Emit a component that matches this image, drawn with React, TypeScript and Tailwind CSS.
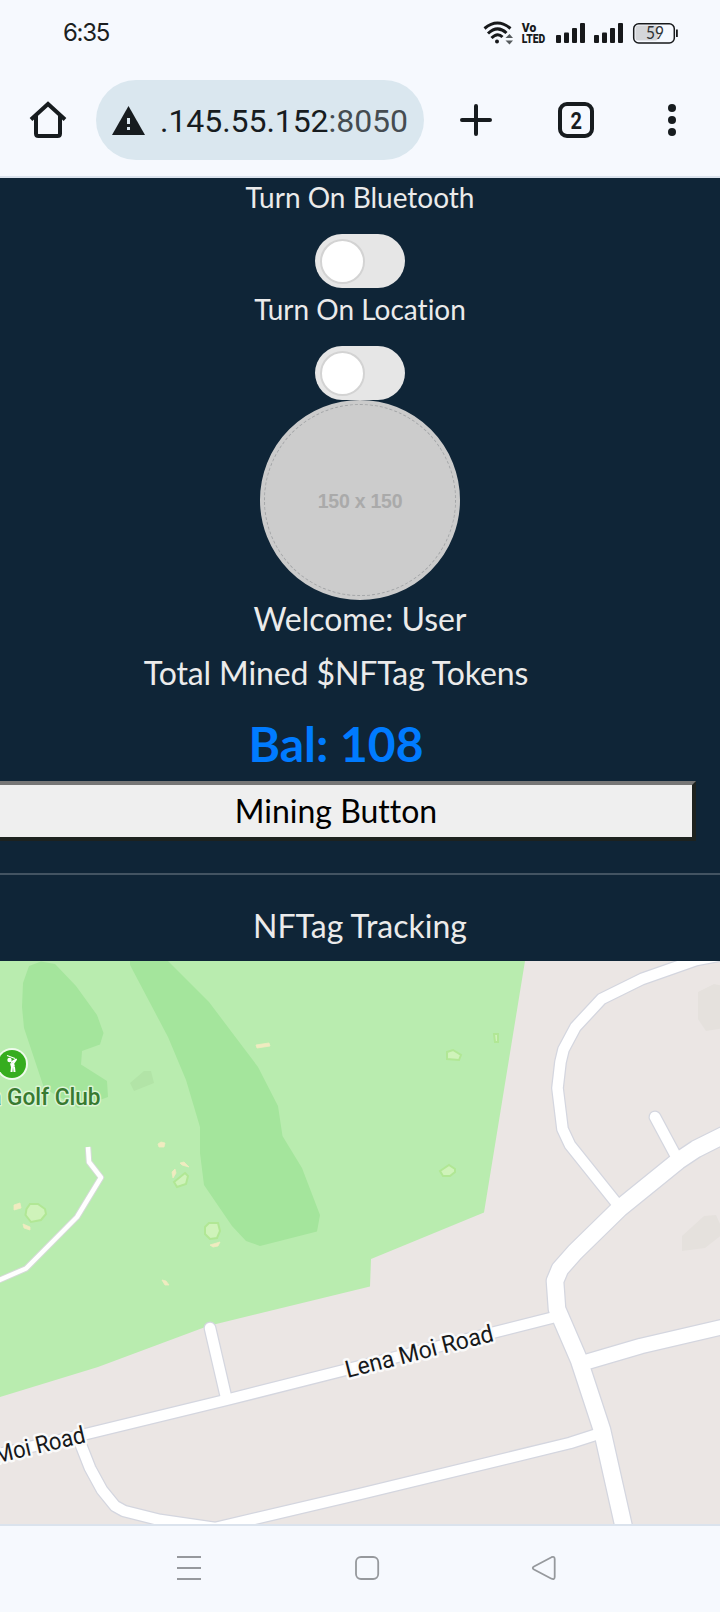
import React from "react";

const minorRoads = [
  "M760 948 L696 960 L642 979 L601.500 999 L575.500 1027 L563.500 1049.500 L560.500 1062 L557.500 1088 L562.500 1129 L570 1145 L618 1205",
  "M655 1117 L678 1160",
  "M-40 1463 L80 1435.500 L226 1400 L555 1317",
  "M210 1328 L226 1397",
  "M79 1440 L90 1468 L102 1490 L115 1506 L124 1511 L160 1520 L215 1528 L360 1494 L570 1443 L598 1434",
];

const path = "M-10 1284 L26 1268.500 L77 1217 L101 1177.500 L89 1162 L88 1147";
const hook = "M740 1127 L696 1149 L678 1161 L620 1208 L575 1252 L560 1269 L555 1281 L557 1309 L579 1360 L602 1430 L624 1528";
const east = "M583 1363 L641 1346 L740 1323";

const greens = [
  "M30 1204 L38 1204 L45 1209 L46 1214 L41 1220 L31 1222 L25.500 1215 L26.500 1209 Z",
  "M185 1173 L188 1176 L186 1184 L177 1187 L174 1182 Z",
  "M209 1223 L218 1223 L220 1231 L217 1238 L210 1239 L205 1234 L205 1227 Z",
  "M447 1052 L453 1050 L461 1055 L459 1060 L447 1059 Z",
  "M494 1034 L498 1034 L498 1042 L495 1042 Z",
  "M440 1171 L449 1165 L455 1169 L455 1172 L450 1176 L443 1176 Z",
];

const bunkers = [
  "M256 1045 L269 1043 L270 1046 L257 1048 Z",
  "M158 1144 L161 1142 L165 1143 L164 1147 L159 1147 Z",
  "M180 1163 L184 1162 L189 1167 L182 1165 Z",
  "M172 1172 L175 1169 L176 1173 L173 1178 Z",
  "M14 1205 L20 1203 L21 1208 L14 1210 Z",
  "M23 1224 L30 1227 L30 1230 L24 1228 Z",
  "M210 1245 L220 1242 L218 1246 L213 1247 Z",
  "M162 1280 L166 1281 L169 1285 L165 1285 Z",
];

function StatusBar() {
  return (
    <div className="flex h-20 items-center bg-[#f6f9fe] pl-[63px]">
      <span className="mb-[14px] font-['Inter',sans-serif] text-[24px] tracking-[-1.3px] text-[#1c1f21]">6:35</span>
      <svg className="mb-[14px] ml-auto shrink-0" width="250" height="50" viewBox="470 7 250 50" fill="none">
        <g stroke="#17191b" strokeWidth="3" fill="none">
          <path d="M484.500 27.500 Q497.500 16.500 510.500 27.500" />
          <path d="M488 32.500 Q497.500 23.500 506.500 32" />
          <path d="M491.500 37 Q497.500 31 502.500 36" />
        </g>
        <circle cx="497" cy="40.500" r="2" fill="#17191b" />
        <path d="M505.500 37 L509.500 33 L513 37 Z M505.500 39.500 L509.500 43.500 L513 39.500 Z" fill="#555a5d" />
        <g fill="#17191b" className="font-['Roboto',sans-serif] font-black">
          <text x="521.800" y="30.800" fontSize="12" textLength="14.500" lengthAdjust="spacingAndGlyphs">Vo</text>
          <text x="521.800" y="41.500" fontSize="13" textLength="23.500" lengthAdjust="spacingAndGlyphs">LTED</text>
          <rect x="556" y="34" width="5" height="8" rx="1" />
          <rect x="564" y="31.500" width="5" height="10.500" rx="1" />
          <rect x="572" y="27" width="5" height="15" rx="1" />
          <rect x="580" y="22" width="5" height="20" rx="1" />
          <rect x="594" y="34" width="5" height="8" rx="1" />
          <rect x="602" y="31.500" width="5" height="10.500" rx="1" />
          <rect x="610" y="27" width="5" height="15" rx="1" />
          <rect x="618" y="22" width="5" height="20" rx="1" />
        </g>
        <rect x="633.700" y="22.700" width="40.600" height="19.300" rx="5" stroke="#17191b" strokeWidth="1.500" />
        <rect x="635.500" y="24.500" width="22.500" height="15" rx="2.500" fill="#d4d6d9" />
        <rect x="676" y="28.500" width="1.800" height="7.500" fill="#17191b" />
        <text x="646" y="38" className="font-['Lato',sans-serif]" fontSize="16.500" fill="#303336" textLength="18" lengthAdjust="spacingAndGlyphs">59</text>
      </svg>
    </div>
  );
}

function BrowserBar() {
  return (
    <div className="flex h-[98px] items-start border-b-2 border-[#dbe3ed] bg-[#f6f9fe]">
      <svg className="mt-[18px] shrink-0" width="96" height="44" viewBox="0 98 96 44" fill="none">
        <path d="M31 119.500 L48 104 L65 119.500 M36 116 V133.500 Q36 136 38.500 136 H57.500 Q60 136 60 133.500 V116" stroke="#171c1f" strokeWidth="4" />
      </svg>
      <div className="flex h-20 w-[328px] shrink-0 items-center overflow-hidden rounded-full bg-[#dae7ef] pl-4">
        <svg width="33" height="29" viewBox="0 0 33 29" className="shrink-0">
          <path d="M16.500 0 L33 29 H0 Z" fill="#171c1f" />
          <path d="M15 12 H18 V18 H15 Z M15 21 H18 V24 H15 Z" fill="#dae7ef" />
        </svg>
        <span className="ml-[15px] whitespace-nowrap pt-px font-['Roboto',sans-serif] text-[32px] tracking-[-0.06px] text-[#171c1f]">
          .145.55.152<span className="text-[#454c51]">:8050</span>
        </span>
      </div>
      <svg className="mt-[18px] shrink-0" width="296" height="44" viewBox="424 98 296 44" fill="none">
        <path d="M462 120 H490 M476 106 V134" stroke="#171c1f" strokeWidth="4" strokeLinecap="round" />
        <rect x="560" y="104" width="32" height="32" rx="7" stroke="#171c1f" strokeWidth="4" />
        <text x="570.500" y="129" className="font-['Roboto',sans-serif] font-bold" fontSize="23.500" fill="#171c1f" textLength="11.500" lengthAdjust="spacingAndGlyphs">2</text>
        <g fill="#171c1f">
          <circle cx="672" cy="108" r="4" />
          <circle cx="672" cy="120" r="4" />
          <circle cx="672" cy="132" r="4" />
        </g>
      </svg>
    </div>
  );
}

function Switch({ label }: { label: string }) {
  return (
    <div className="flex h-[112px] flex-col items-center">
      <span className="h-[58px] pt-1 text-[28px] leading-[34px]">{label}</span>
      <div className="flex h-[54px] w-[90px] items-center rounded-full bg-[#e6e6e6] pl-[5px]">
        <div className="size-[45px] rounded-full border-2 border-[#d3d3d3] bg-white" />
      </div>
    </div>
  );
}

function TrackingMap() {
  return (
    <svg className="block h-[563px] w-[720px]" viewBox="0 961 720 563">
      <rect x="0" y="961" width="720" height="563" fill="#ebe6e4" />
      <path d="M698 992 L714 984 L724 986 V1028 L706 1031 L698 1019 Z M682 1236 L704 1216 L716 1215 L724 1233 L705 1248 L682 1251 Z" fill="#e5e1dd" />
      <path d="M0 961 H525 L484 1212.500 L371 1259 L370 1286.500 L208 1326 L98 1367 L0 1397 Z" fill="#b9ecaf" />
      <path d="M29 966 L41 961.500 L55 964 L76 986 L97 1015 L103.500 1033 L100 1044.500 L82 1051 L81 1064.500 L107 1081 L108 1097 L78 1108 L44 1088 L24 1028 L22 1007 L23 983 Z" fill="#a4e59c" />
      <path d="M130 961 H168 L209 1002 L258 1067 L278 1106 L282.500 1136 L302 1168 L320 1215 L317 1231.500 L260 1246 L246 1241 L232 1226 L204 1185 L200 1153 V1127 L186 1080 L168 1037 L130 965 Z" fill="#a4e59c" />
      <path d="M130 1083 L144 1071 L151 1071 L154 1083 L134 1091 Z" fill="#b2e4a7" />
      <g fill="#f0ebc0" stroke="#f0ebc0" strokeWidth="0.800">{bunkers.map((d) => <path key={d} d={d} />)}</g>
      <g fill="#cff3ba" stroke="#b1e795" strokeWidth="2">{greens.map((d) => <path key={d} d={d} />)}</g>
      <g fill="none" strokeLinejoin="round">
        <path d={path} stroke="#d4dad6" strokeWidth="6.500" />
        <g stroke="#d4d6df" strokeLinecap="round">
          {minorRoads.map((d) => <path key={d} d={d} strokeWidth="13" />)}
          <path d={hook} strokeWidth="19" />
          <path d={east} strokeWidth="17" />
        </g>
        <path d={path} stroke="#fff" strokeWidth="4.500" />
        <g stroke="#fff" strokeLinecap="round">
          {minorRoads.map((d) => <path key={d} d={d} strokeWidth="10.500" />)}
          <path d={hook} strokeWidth="16.500" />
          <path d={east} strokeWidth="14.500" />
        </g>
      </g>
      <circle cx="12" cy="1064" r="16" fill="#effbec" />
      <circle cx="12" cy="1064" r="14" fill="#36ad1e" />
      <g stroke="#fff" fill="none" strokeLinejoin="round">
        <path d="M7 1055.500 L15 1058.500" strokeWidth="1.200" />
        <path d="M11 1062.500 L16 1059.500 L13.500 1063" strokeWidth="2" />
        <path d="M12 1063 L13 1067" strokeWidth="4" />
        <path d="M12 1067 L11.500 1072 M14 1067 L14.500 1072" strokeWidth="2" />
      </g>
      <circle cx="9.500" cy="1060" r="2.200" fill="#fff" />
      <g className="font-['Roboto',sans-serif]" paintOrder="stroke" strokeLinejoin="round">
        <g className="font-medium" fill="#387a31" stroke="#dcf5d5" strokeWidth="3" fontSize="24">
          <text x="-10.500" y="1105" textLength="12" lengthAdjust="spacingAndGlyphs">a</text>
          <text x="7" y="1105" textLength="93.500" lengthAdjust="spacingAndGlyphs">Golf Club</text>
        </g>
        <g fill="#17191b" stroke="#fafafa" strokeWidth="5" fontSize="24">
          <text x="0" y="0" transform="translate(347.500 1378) rotate(-14.200)" textLength="152" lengthAdjust="spacingAndGlyphs">Lena Moi Road</text>
          <text x="0" y="0" transform="translate(-4 1463.500) rotate(-13.200)" textLength="93" lengthAdjust="spacingAndGlyphs">Moi Road</text>
        </g>
      </g>
    </svg>
  );
}

function NavBar() {
  return (
    <div className="flex h-[88px] justify-center border-t-2 border-[#dbe3ed] bg-[#f6f9fe]">
      <svg width="720" height="86" viewBox="0 1526 720 86" fill="none" stroke="#96999d" strokeWidth="1.800">
        <path d="M177 1557 H201 M177 1568 H201 M177 1579 H201" />
        <rect x="356" y="1557" width="22.200" height="22" rx="5" />
        <path d="M534 1566.500 L551.500 1557.200 Q554.500 1556 554.700 1559 V1577 Q554.500 1580 551.500 1578.700 L534 1569.500 Q531.500 1568 534 1566.500 Z" />
      </svg>
    </div>
  );
}

export default function App() {
  return (
    <div className="flex h-[1612px] w-[720px] flex-col overflow-hidden bg-[#0f2537] font-['Lato',sans-serif] text-[#ebebeb] [font-variant-ligatures:none]">
      <StatusBar />
      <BrowserBar />
      <main className="flex h-[783px] flex-col">
        <div className="-mt-0.5">
          <Switch label="Turn On Bluetooth" />
          <Switch label="Turn On Location" />
        </div>
        <div className="flex size-[200px] shrink-0 items-center justify-center self-center rounded-full border-4 border-[#cbcbcb] bg-[#cccccc]">
          <div className="flex size-48 shrink-0 items-center justify-center rounded-full border border-dashed border-[#a4a6a8] pt-1 font-['Liberation_Sans',sans-serif] text-[19.5px] font-bold tracking-[-0.25px] text-[#aaaaaa]">
            150 x 150
          </div>
        </div>
        <div className="h-[54px] text-center text-[32px] leading-[38px] tracking-[-0.05px]">Welcome: User</div>
        <div className="w-[672px] text-center">
          <div className="h-[60px] text-[32px] leading-[38px] tracking-[-0.11px]">Total Mined $NFTag Tokens</div>
          <div className="h-[67px] text-[48px] font-bold leading-[60px] text-[#007bff]">Bal: 108</div>
        </div>
        <button className="-ml-1 block h-[60px] w-[700px] shrink-0 border-4 border-b-[#1d221f] border-l-[#767676] border-r-[#1d221f] border-t-[#767676] bg-[#efefef] pr-5 text-center text-[32px] leading-[38px] text-black">
          Mining Button
        </button>
        <hr className="mt-8 border-t-2 border-[#435462]" />
        <h2 className="pt-8 text-center text-[32px] leading-[38px]">NFTag Tracking</h2>
      </main>
      <TrackingMap />
      <NavBar />
    </div>
  );
}
